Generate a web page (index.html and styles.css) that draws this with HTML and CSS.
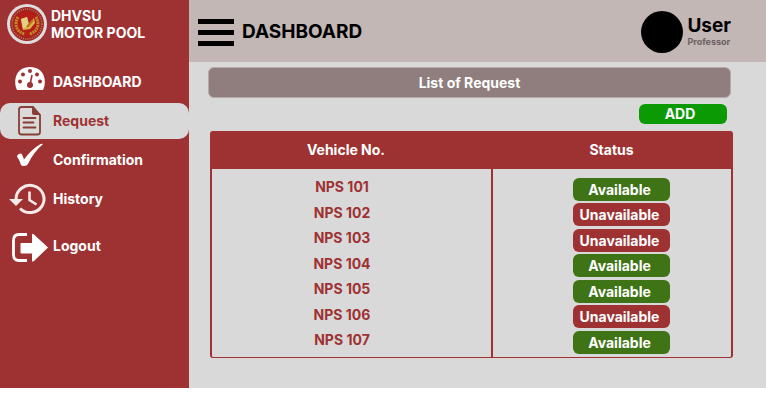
FILE: index.html
```html
<!DOCTYPE html>
<html lang="en">
<head>
<meta charset="utf-8">
<meta name="viewport" content="width=device-width, initial-scale=1">
<title>DHVSU Motor Pool</title>
<link rel="stylesheet" href="styles.css">
</head>
<body>
<div class="app">
  <aside class="sidebar">
    <div class="brand">
      <svg class="seal" viewBox="0 0 40 40" aria-hidden="true">
        <circle cx="20" cy="20" r="20" fill="#dedcdf"/>
        <circle cx="20" cy="20" r="17" fill="#a12622"/>
        <circle cx="20" cy="20" r="15" fill="none" stroke="#b98a63" stroke-width="1.4" stroke-dasharray="1 1.2"/>
        <circle cx="20" cy="20" r="12.8" fill="#b51d18"/>
        <path d="M11 13C7 20 9 28 18 30M29 13c4 7 2 15-7 17" fill="none" stroke="#c08a2c" stroke-width="3" stroke-dasharray="2 .7"/>
        <path d="M14 15l6-2 2 7 5-6 1 5-5 6-7 1-1-4z" fill="#d9b648"/>
        <path d="M14 15l6-2 2 9-6 2z" fill="#e2d184"/>
        <path d="M20 23l6-7" stroke="#c46c22" stroke-width="2"/>
      </svg>
      <span class="brand-name">DHVSU<br>MOTOR POOL</span>
    </div>
    <nav class="menu">
      <a class="item" href="#dashboard">
        <svg class="icon" viewBox="0 0 40 30" aria-hidden="true">
          <path d="M8 23C4 15 6 0 21 0s17 15 13 23z" fill="#fff"/>
          <g fill="#9e3232"><circle cx="11" cy="14.500" r="2"/><circle cx="14" cy="7.500" r="2"/><circle cx="21" cy="4" r="2"/><circle cx="28" cy="7.500" r="2"/><circle cx="31" cy="14.500" r="2"/><circle cx="21" cy="18" r="3"/></g>
          <path d="M21 18l2-10" stroke="#9e3232" stroke-width="1.600"/>
        </svg>
        <span>DASHBOARD</span>
      </a>
      <a class="item active" href="#request" aria-current="page">
        <svg class="icon" viewBox="0 0 40 30" aria-hidden="true">
          <path d="M12 1h12l7 8v17q0 2.500-2.500 2.500H12.500Q10 28.500 10 26V3.500Q10 1 12.500 1z" fill="none" stroke="#873e34" stroke-width="1.800"/>
          <path d="M23 0l9 9h-7q-2 0-2-2z" fill="#873e34"/>
          <path d="M14.500 12h12M14.500 16.500h10M14.500 21.500h12" stroke="#873e34" stroke-width="1.800" stroke-linecap="round"/>
        </svg>
        <span>Request</span>
      </a>
      <a class="item" href="#confirmation">
        <svg class="icon" viewBox="0 0 40 30" aria-hidden="true">
          <path d="M8 11.500q0-2 3-3 2-.3 2.500 2l1.500 4Q23 4 30 0q3-2 4-1Q24 8 19 19q-1 2-4 2-2.500 0-3-1-1-4-4-8.500z" fill="#fff"/>
        </svg>
        <span>Confirmation</span>
      </a>
      <a class="item" href="#history">
        <svg class="icon" viewBox="0 0 40 30" aria-hidden="true">
          <path d="M7 15A14 13.600 0 1 1 11 24.500" fill="none" stroke="#f6e9e9" stroke-width="3"/>
          <path d="M0 15h14l-7 7z" fill="#f6e9e9"/>
          <path d="M20.500 7.500v8.500l7 4.500" fill="none" stroke="#f6e9e9" stroke-width="2.600"/>
        </svg>
        <span>History</span>
      </a>
      <a class="item logout" href="#logout">
        <svg class="icon" viewBox="0 0 40 30" aria-hidden="true">
          <path d="M18 3.500H10q-5.500 0-5.500 6v14q0 6 5.500 6h8" fill="none" stroke="#fff" stroke-width="2.800"/>
          <path d="M12 12h11V4q0-2 2-.5L39 16.500 25 30q-2 1.500-2-.5v-7H12.500q-1 0-1-1V12.500q0-.5.5-.5z" fill="#fff"/>
        </svg>
        <span>Logout</span>
      </a>
    </nav>
  </aside>
  <div class="content">
    <header class="topbar">
      <button class="toggle" type="button" aria-label="Menu"><i></i><i></i><i></i></button>
      <h1 class="title">DASHBOARD</h1>
      <div class="user">
        <span class="avatar"></span>
        <div>
          <div class="user-name">User</div>
          <div class="user-role">Professor</div>
        </div>
      </div>
    </header>
    <main class="main">
      <h2 class="list-title">List of Request</h2>
      <button class="add" type="button">ADD</button>
      <div class="panel">
        <table class="requests">
          <thead><tr><th scope="col" class="vehicle">Vehicle No.</th><th scope="col">Status</th></tr></thead>
          <tbody>
            <tr><td>NPS 101</td><td><span class="status available">Available</span></td></tr>
            <tr><td>NPS 102</td><td><span class="status">Unavailable</span></td></tr>
            <tr><td>NPS 103</td><td><span class="status">Unavailable</span></td></tr>
            <tr><td>NPS 104</td><td><span class="status available">Available</span></td></tr>
            <tr><td>NPS 105</td><td><span class="status available">Available</span></td></tr>
            <tr><td>NPS 106</td><td><span class="status">Unavailable</span></td></tr>
            <tr><td>NPS 107</td><td><span class="status available">Available</span></td></tr>
          </tbody>
        </table>
      </div>
    </main>
  </div>
</div>
</body>
</html>
```
FILE: styles.css
```css
* { box-sizing: border-box; }
body {
  margin: 0;
  background: #fff;
  font: 700 14px/18px Inter, "Liberation Sans", sans-serif;
}
button { border: 0; font: inherit; cursor: pointer; }
.app { display: grid; grid-template-columns: 189px 1fr; }

.sidebar { background: #9e3232; color: #fff; }
.brand { display: flex; align-items: center; gap: 4px; height: 48px; padding-left: 7px; }
.seal { width: 40px; height: 40px; }
.brand-name { line-height: 17px; }
.menu { display: flex; flex-direction: column; gap: 3px; padding-top: 16px; }
.item {
  display: flex;
  align-items: center;
  gap: 4px;
  height: 36px;
  padding-left: 9px;
  color: #fff;
  text-decoration: none;
}
.icon { width: 40px; height: 30px; overflow: visible; }
.active { background: #d9d9d9; color: #9e3232; border-radius: 10px; }
.logout { margin-top: 8px; }

.content { background: #d9d9d9; }
.topbar {
  display: flex;
  align-items: center;
  height: 62px;
  padding: 2px 35px 0 9px;
  background: #c2b7b5;
}
.toggle {
  display: grid;
  gap: 6px;
  width: 36px;
  padding: 0;
  background: none;
}
.toggle i { height: 5px; background: #000; }
.title { margin: 0 auto 0 8px; font-size: 19px; line-height: 24px; }
.user { display: flex; align-items: center; gap: 4px; }
.avatar { width: 42px; height: 42px; border-radius: 50%; background: #000; }
.user-name { font-size: 19px; line-height: 20px; }
.user-role { font-size: 9px; line-height: 12px; color: #6b6060; }

.main { display: flex; flex-direction: column; padding: 5px 33px 30px 19px; }
.list-title {
  margin: 0 2px 0 0;
  padding: 6px;
  border: 1px solid #b5a9a9;
  border-radius: 6px;
  background: #8f7e7d;
  color: #fff;
  font-size: 14px;
  line-height: 17px;
  text-align: center;
}
.add {
  align-self: flex-end;
  width: 88px;
  height: 20px;
  margin: 6px 6px 7px 0;
  padding: 0 6px 0 0;
  border-radius: 6px;
  background: #0c9a04;
  color: #fff;
}
.panel {
  margin-left: 2px;
  padding-bottom: 2px;
  border: solid #9e3232;
  border-width: 0 2px 1px;
  border-radius: 3px;
  background: linear-gradient(#9e3232, #9e3232) 279px 0 / 2px 100% no-repeat;
}
.requests { width: 100%; border-spacing: 0; table-layout: fixed; color: #9e3232; }
.requests th { height: 38px; padding: 0; background: #9e3232; color: #fff; }
.vehicle { width: 280px; }
.requests th.vehicle { padding-right: 12px; }
.requests td { height: 26px; padding: 0 20px 4px 0; text-align: center; }
.requests tr:nth-child(even) td { height: 25px; }
.requests td + td { padding: 0 0 0 20px; }
.requests tbody::before { content: ""; display: table-row; height: 7px; }
.status {
  display: block;
  width: 97px;
  margin: 0 auto;
  padding: 3px 4px 2px 0;
  border-radius: 6px;
  background: #9e3232;
  color: #fff;
}
.available { background: #3f7416; }
```
